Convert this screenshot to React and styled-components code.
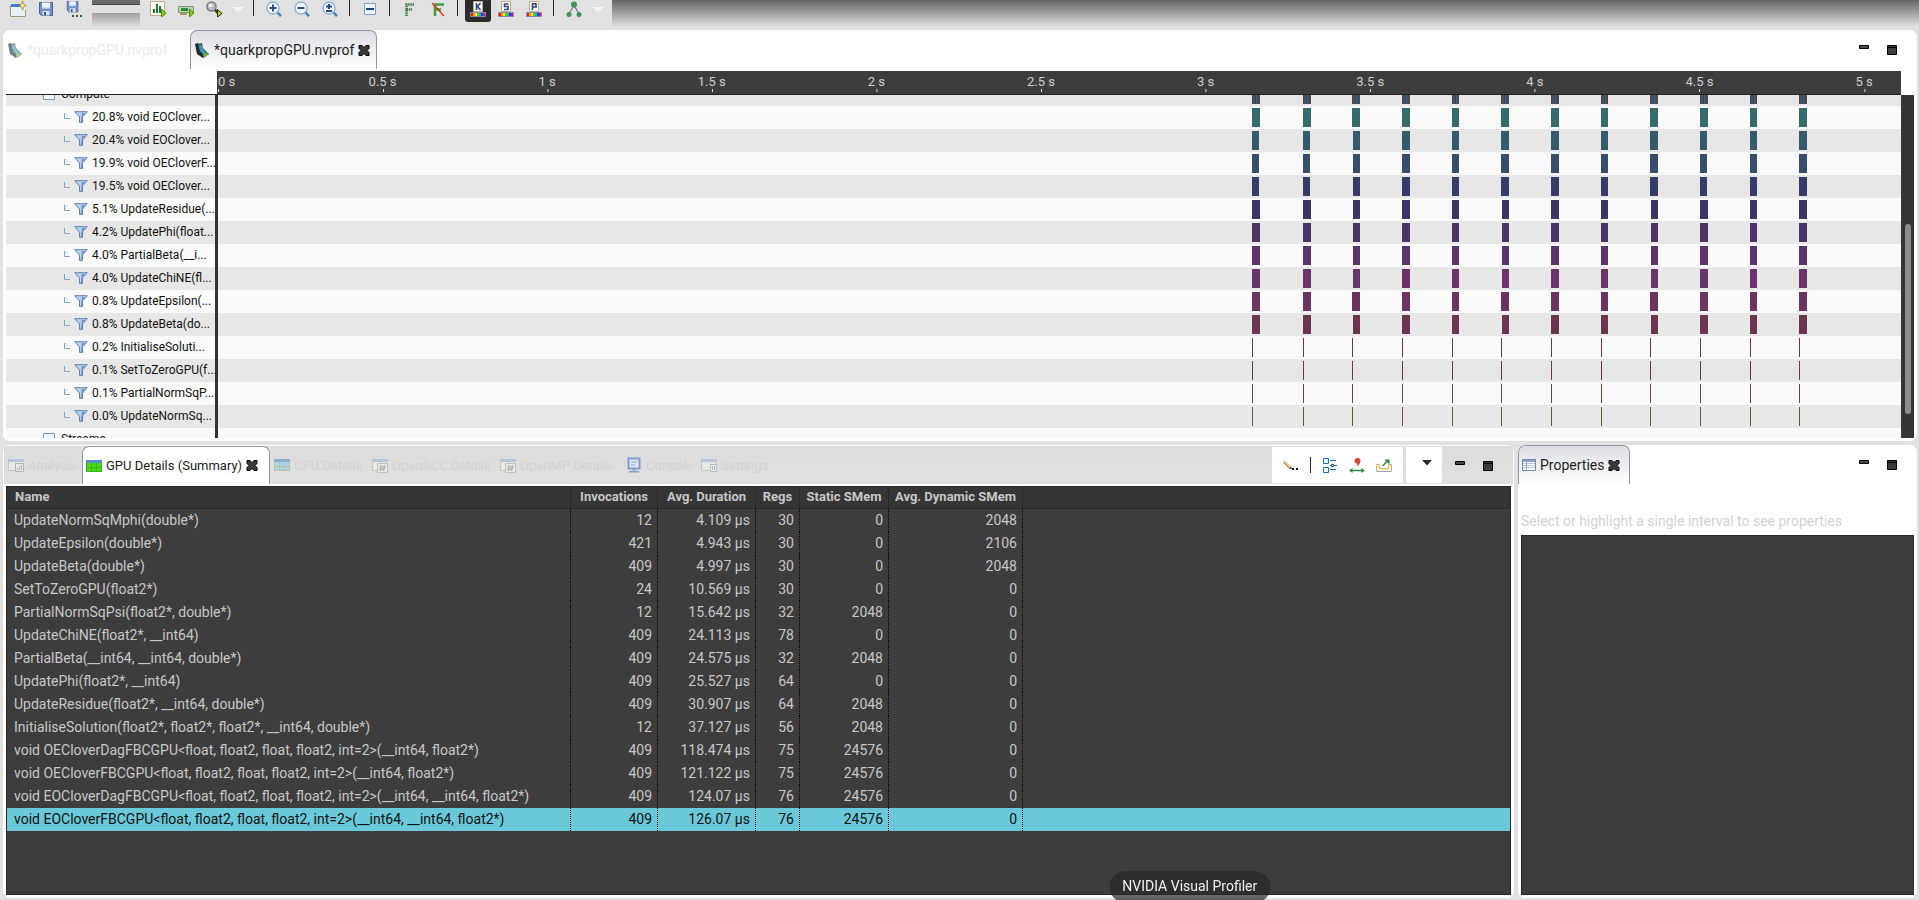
import React from 'react';
import styled, { createGlobalStyle, css } from 'styled-components';

const LANE_WIDTH = 1683; // timeline units, one per pixel on a full hd window
const HALF_SECOND = 164.6;

const ticks = ['0 s', '0.5 s', '1 s', '1.5 s', '2 s', '2.5 s', '3 s', '3.5 s', '4 s', '4.5 s', '5 s'];

// [start, length] of each burst of kernels
const wide = [[1034, 8], [1085, 8], [1134, 8], [1184, 8], [1234, 7], [1283, 8], [1333, 8], [1383, 7], [1432, 8], [1482, 8], [1532, 7], [1581, 8]];
const late = [[1034, 8], [1085, 8], [1135, 7], [1184, 8], [1234, 7], [1284, 7], [1333, 8], [1383, 7], [1433, 7], [1482, 8], [1532, 7], [1581, 8]];
const short = [[1034, 7], [1085, 7], [1135, 7], [1184, 8], [1234, 7], [1283, 8], [1333, 8], [1383, 7], [1432, 8], [1482, 7], [1532, 7], [1581, 8]];
const thin = wide.map(([start]) => [start, 1]);

const kernels = [
    { label: '20.8% void EOClover...', color: '#356b6a', bars: wide },
    { label: '20.4% void EOClover...', color: '#345b6b', bars: short },
    { label: '19.9% void OECloverF...', color: '#364d6b', bars: short },
    { label: '19.5% void OEClover...', color: '#353c6a', bars: short },
    { label: '5.1% UpdateResidue(...', color: '#3b3468', bars: late },
    { label: '4.2% UpdatePhi(float...', color: '#4c3468', bars: late },
    { label: '4.0% PartialBeta(__i...', color: '#5a346a', bars: late },
    { label: '4.0% UpdateChiNE(fl...', color: '#6a346a', bars: late },
    { label: '0.8% UpdateEpsilon(...', color: '#6b345e', bars: wide },
    { label: '0.8% UpdateBeta(do...', color: '#6b3450', bars: late },
    { label: '0.2% InitialiseSoluti...', color: '#6b343f', bars: thin },
    { label: '0.1% SetToZeroGPU(f...', color: '#6b3534', bars: thin },
    { label: '0.1% PartialNormSqP...', color: '#6b4634', bars: thin },
    { label: '0.0% UpdateNormSq...', color: '#6b5634', bars: thin },
];

const columns = [
    { title: 'Name', width: 564 },
    { title: 'Invocations', width: 87 },
    { title: 'Avg. Duration', width: 98 },
    { title: 'Regs', width: 44 },
    { title: 'Static SMem', width: 89 },
    { title: 'Avg. Dynamic SMem', width: 134 },
];

const details = [
    ['UpdateNormSqMphi(double*)', '12', '4.109 µs', '30', '0', '2048'],
    ['UpdateEpsilon(double*)', '421', '4.943 µs', '30', '0', '2106'],
    ['UpdateBeta(double*)', '409', '4.997 µs', '30', '0', '2048'],
    ['SetToZeroGPU(float2*)', '24', '10.569 µs', '30', '0', '0'],
    ['PartialNormSqPsi(float2*, double*)', '12', '15.642 µs', '32', '2048', '0'],
    ['UpdateChiNE(float2*, __int64)', '409', '24.113 µs', '78', '0', '0'],
    ['PartialBeta(__int64, __int64, double*)', '409', '24.575 µs', '32', '2048', '0'],
    ['UpdatePhi(float2*, __int64)', '409', '25.527 µs', '64', '0', '0'],
    ['UpdateResidue(float2*, __int64, double*)', '409', '30.907 µs', '64', '2048', '0'],
    ['InitialiseSolution(float2*, float2*, float2*, __int64, double*)', '12', '37.127 µs', '56', '2048', '0'],
    ['void OECloverDagFBCGPU<float, float2, float, float2, int=2>(__int64, float2*)', '409', '118.474 µs', '75', '24576', '0'],
    ['void OECloverFBCGPU<float, float2, float, float2, int=2>(__int64, float2*)', '409', '121.122 µs', '75', '24576', '0'],
    ['void EOCloverDagFBCGPU<float, float2, float, float2, int=2>(__int64, __int64, float2*)', '409', '124.07 µs', '76', '24576', '0'],
    ['void EOCloverFBCGPU<float, float2, float, float2, int=2>(__int64, __int64, float2*)', '409', '126.07 µs', '76', '24576', '0'],
];

const percent = (value) => `${(value / LANE_WIDTH) * 100}%`;

/* icons */

const Icon = ({ size = 16, children }) => (
    <svg width={size} height={size} viewBox="0 0 16 16" fill="none" aria-hidden="true">{children}</svg>
);

const NewIcon = () => (
    <Icon>
        <path d="M.5 4.500V15.500H15.500V9" fill="#eef6fc" stroke="#a8946a" />
        <path d="M1 3h10v3H1z" fill="#3f7fc4" />
        <path d="M1 6h14v9H1z" fill="#e6f1f8" />
        <path d="M12.500 0l1.200 3.300L16 4.500l-2.300 1.200L12.500 9l-1.200-3.300L9 4.500l2.300-1.200z" fill="#fff2b0" stroke="#a97818" strokeWidth=".8" />
    </Icon>
);

const Disk = () => (
    <>
        <path d="M1.500 1.500h13v13h-11l-2-2z" fill="#6f8fc9" stroke="#4a66a0" />
        <path d="M4 1.500h8v6H4z" fill="#eef3fb" />
        <path d="M4 7h8" stroke="#b9c8e4" />
        <path d="M4.500 10h7v4.500h-7z" fill="#dfe3ea" />
        <path d="M6 11h2v3.500H6z" fill="#3d548a" />
    </>
);

const SaveIcon = () => <Icon><Disk /></Icon>;

const SaveAllIcon = () => (
    <Icon>
        <g transform="translate(0 -1) scale(.82)"><Disk /></g>
        <path d="M6 14h2v2H6zM10 14h2v2h-2zM14 14h2v2h-2z" fill="#1f6b2c" />
    </Icon>
);

const Play = () => <path d="M11.500 8l4.500 4-4.500 4z" fill="#8fd400" stroke="#2f7a10" strokeWidth=".8" />;

const ChartIcon = () => (
    <Icon>
        <path d="M.5.5h14v14H.5z" fill="#fffef6" stroke="#bfae7d" />
        <path d="M3 8h2v4H3zM6 3h2v9H6zM9 5h2v7H9z" fill="#1f7a3a" />
        <Play />
    </Icon>
);

const CardIcon = () => (
    <Icon>
        <path d="M.5 5.500h15v6H.5z" fill="#b9d3b0" stroke="#7c9874" />
        <path d="M3 7h7v3H3z" fill="#2c8c3c" />
        <path d="M2 12h7v2H2z" fill="#ad9a60" />
        <Play />
    </Icon>
);

const InspectIcon = () => (
    <Icon>
        <circle cx="5.500" cy="5.500" r="4.500" fill="#bdbdbd" stroke="#7b7b7b" strokeWidth="1.500" />
        <circle cx="4.500" cy="4.500" r="1.800" fill="#f2f2f2" />
        <path d="M9 9l4 4" stroke="#3f3f20" strokeWidth="2.500" />
        <path d="M11.500 8.500l4.500 4-4.500 3.500z" fill="#b2e000" stroke="#222" />
    </Icon>
);

const ZoomIcon = ({ mark }) => (
    <Icon>
        <path d="M11 11l4 4.200" stroke="#4d7fb8" strokeWidth="2.500" />
        <circle cx="7" cy="7" r="6" fill="#f6faff" stroke="#8fb2da" strokeWidth="1.400" />
        <path d={mark} stroke="#27498f" strokeWidth="2" />
    </Icon>
);

const CollapseIcon = () => (
    <Icon>
        <path d="M2.500 2.500h11v11h-11z" fill="#e8f6fd" stroke="#7f9cc0" />
        <path d="M4 8h8" stroke="#1d4480" strokeWidth="2" />
    </Icon>
);

const FilterOnIcon = () => (
    <Icon>
        <path d="M4.500 15V3.500H12M4.500 8.500H10" stroke="#3f7a45" strokeWidth="2.500" strokeDasharray="1.500 .7" />
    </Icon>
);

const FilterOffIcon = () => (
    <Icon>
        <path d="M5 15V3.500h9M5 8.500h6" stroke="#3fa03f" strokeWidth="2.500" />
        <path d="M2 2l12 13" stroke="#ff1a1a" strokeWidth="1.200" />
    </Icon>
);

const LetterIcon = ({ mark }) => (
    <Icon>
        <path d="M3.500.5h9v10h-9z" fill="#fffdf2" stroke="#b6ad86" />
        <path d={mark} stroke="#28468a" strokeWidth="1.600" />
        <path d="M.5 11.500h15v4H.5z" fill="#777" stroke="#8a86b8" />
        <path d="M1 12h2v3H1z" fill="#e02020" />
        <path d="M3 12h2v3H3z" fill="#ff9a00" />
        <path d="M5 12h2v3H5z" fill="#ffee00" />
        <path d="M7 12h2v3H7z" fill="#40d830" />
        <path d="M9 12h2v3H9z" fill="#18b0c8" />
        <path d="M11 12h2v3h-2z" fill="#2040d0" />
        <path d="M13 12h2v3h-2z" fill="#c01890" />
    </Icon>
);

const GraphIcon = () => (
    <Icon>
        <path d="M3 13L8 4l5 9" stroke="#777c99" strokeWidth="1.300" />
        <circle cx="8" cy="3.500" r="3" fill="#3f9655" />
        <circle cx="3" cy="13.500" r="2.500" fill="#3f9655" />
        <circle cx="13" cy="13.500" r="2.500" fill="#3f9655" />
    </Icon>
);

const ProfileIcon = () => (
    <Icon>
        <path d="M2 2l6-1 1 5 6 6-5 4-6-4-2-5z" fill="#2d6b4e" />
        <path d="M1 2l3-1 1 6 4 5v4l-6-4z" fill="#1b2c31" />
        <path d="M5 4l3-1 1 4 3 4-2 2-4-4z" fill="#3e9bb5" />
        <path d="M9 12l6-1-5 5z" fill="#7fae3e" />
    </Icon>
);

const CloseIcon = () => (
    <svg width="12" height="11" viewBox="0 0 12 11" aria-hidden="true">
        <path d="M1 .5h3l2 2 2-2h3v3l-2 2 2 2v3H8l-2-2-2 2H1v-3l2-2-2-2z" fill="#3a3a3a" stroke="#000" />
    </svg>
);

const FunnelIcon = () => (
    <svg width="14" height="12" viewBox="0 0 14 12" aria-hidden="true">
        <path d="M.7.7h12.600L8.500 6v5.400h-3V6z" fill="#b9cfeb" stroke="#5c80b8" />
        <path d="M8 2h3L8 5.500V11H7z" fill="#6a8cc4" />
    </svg>
);

const BranchIcon = () => (
    <svg width="6" height="8" viewBox="0 0 6 8" aria-hidden="true">
        <path d="M1 0h3v4H1z" fill="#d9f0f8" />
        <path d="M.5 0v5.500H6" fill="none" stroke="#8c9db8" />
    </svg>
);

const NodeIcon = () => (
    <svg width="12" height="12" viewBox="0 0 12 12" aria-hidden="true">
        <path d="M.5.5h11v11H.5z" fill="#eaf7fd" stroke="#7f94b4" />
        <path d="M3 6h6" stroke="#1d4480" strokeWidth="2" />
    </svg>
);

const WindowFrame = () => (
    <>
        <path d="M.5 2.500h15v11H.5z" fill="#e8f2f4" stroke="#bfb490" />
        <path d="M0 2h16v3H0z" fill="#9db9d8" />
    </>
);

const AnalysisIcon = () => (
    <Icon>
        <WindowFrame />
        <path d="M7.500 6.500h8v8h-8z" fill="#f2f2ee" stroke="#9a9a92" />
        <path d="M9.500 11v2M11.500 9v4M13.500 8v5" stroke="#8aa08a" />
    </Icon>
);

const GridIcon = ({ cell, line }) => (
    <Icon>
        <path d="M0 2h16v12H0z" fill={cell} />
        <path d="M0 2h16v3H0z" fill="#5b8cc9" />
        <path d="M.5 5v9M5.500 5v9M10.500 5v9M15.500 5v9M0 9.500h16M0 13.500h16" stroke={line} />
    </Icon>
);

const HashIcon = () => (
    <Icon>
        <WindowFrame />
        <path d="M5.500 6.500h10v9h-10z" fill="#f0efea" stroke="#bfb08c" />
        <path d="M9.500 8l-1 6M12.500 8l-1 6M7.500 10h6M7 12h6" stroke="#8a8a90" />
    </Icon>
);

const ConsoleIcon = () => (
    <Icon>
        <path d="M2.500 1.500h11v10h-11z" fill="#dfe9f6" stroke="#7f9ccb" strokeWidth="2" />
        <path d="M5 5h6M5 8h4" stroke="#8ea6cc" />
        <path d="M6 12h4v1.500H6zM3 14h10v1.500H3z" fill="#86a3cf" />
    </Icon>
);

const SettingsIcon = () => (
    <Icon>
        <WindowFrame />
        <path d="M9.500 7.500h6v7h-6z" fill="#f6f8f8" stroke="#9aa5b4" />
        <path d="M11.500 9v4" stroke="#7ab870" />
        <path d="M13.500 9v4" stroke="#6e8ee0" />
    </Icon>
);

const PropertiesIcon = () => (
    <svg width="14" height="12" viewBox="0 0 14 12" fill="none" aria-hidden="true">
        <path d="M.5.5h13v11H.5z" fill="#fff" stroke="#6f87ad" />
        <path d="M1 1h12v2H1z" fill="#8fa6c6" />
        <path d="M1 4.500h12M1 6.500h12M1 8.500h12" stroke="#b4c6dc" />
        <path d="M4.500 3v8" stroke="#8fa6c6" />
    </svg>
);

const PencilIcon = () => (
    <Icon>
        <path d="M1 4.500l6 6" stroke="#b98d4c" strokeWidth="3" />
        <path d="M1.500 4l5.500 5.500" stroke="#f6dfae" strokeWidth="1.500" />
        <path d="M6 12h2.500V9.500z" fill="#222" />
        <path d="M9 11h2v2H9zM13 11h2v2h-2z" fill="#111" />
    </Icon>
);

const HierarchyIcon = () => (
    <Icon>
        <path d="M1.500 1.500h5v5h-5zM1.500 10.500h5v5h-5z" fill="#e8f4fc" stroke="#1f72b4" />
        <path d="M8 3.500h6M8 12.500h6M8 8.500h7" stroke="#1f72b4" />
        <path d="M9.500 7.500h2v2h-2z" fill="#fff" stroke="#16508a" />
    </Icon>
);

const CommaIcon = () => (
    <Icon>
        <path d="M8.500 1c2.600 0 3.600 2 2.600 4.500C10.300 7.600 9 9 7.500 9.500c.8-1.200 1-2 .6-3C6 6.500 5.500 5 5.500 3.800 5.500 2.200 6.800 1 8.500 1z" fill="#cf4a3a" />
        <path d="M2 13.500h12" stroke="#2c8a3c" strokeWidth="1.500" />
        <path d="M3.500 11L0 13.500 3.500 16zM12.500 11l3.500 2.500-3.500 2.500z" fill="#2c8a3c" />
    </Icon>
);

const ExportIcon = () => (
    <Icon>
        <path d="M.5 7.500h3v4h9v-4h3v7H.5z" fill="#fbf3cf" stroke="#c9b872" />
        <path d="M1 14.500h14" stroke="#9aa4bc" />
        <path d="M6.500 9L12 3.500" stroke="#2c8a3c" strokeWidth="1.500" />
        <path d="M8.500 2.500h5v5z" fill="#2c8a3c" />
    </Icon>
);

const Triangle = ({ fill }) => (
    <svg width="10" height="6" viewBox="0 0 10 6" aria-hidden="true">
        <path d="M0 0h10L5 5.500z" fill={fill} />
    </svg>
);

const MinimizeIcon = () => (
    <svg width="10" height="10" viewBox="0 0 10 10" aria-hidden="true">
        <path d="M.5.5h9v3h-9z" fill="#4a4a4a" stroke="#000" />
    </svg>
);

const MaximizeIcon = () => (
    <svg width="10" height="10" viewBox="0 0 10 10" aria-hidden="true">
        <path d="M.5.5h9v9h-9z" fill="#3c3c3c" stroke="#000" />
        <path d="M1 2.500h8" stroke="#000" />
    </svg>
);

const WindowButtons = () => (
    <WindowControls>
        <WindowButton type="button" aria-label="Minimize"><MinimizeIcon /></WindowButton>
        <WindowButton type="button" aria-label="Maximize"><MaximizeIcon /></WindowButton>
    </WindowControls>
);

const MainToolbar = () => (
    <TopStrip>
        <Toolbar>
            <ToolButton type="button" aria-label="New"><NewIcon /></ToolButton>
            <ToolButton type="button" aria-label="Save"><SaveIcon /></ToolButton>
            <ToolButton type="button" aria-label="Save all"><SaveAllIcon /></ToolButton>
            <ShadedGap />
            <ToolButton type="button" aria-label="Analyze"><ChartIcon /></ToolButton>
            <ToolButton type="button" aria-label="Device"><CardIcon /></ToolButton>
            <ToolButton type="button" aria-label="Inspect"><InspectIcon /></ToolButton>
            <ArrowButton type="button" aria-label="Inspect menu"><Triangle fill="#f6f6f6" /></ArrowButton>
            <Separator />
            <ToolButton type="button" aria-label="Zoom in"><ZoomIcon mark="M3.500 7h7M7 3.500v7" /></ToolButton>
            <ToolButton type="button" aria-label="Zoom out"><ZoomIcon mark="M3.500 7h7" /></ToolButton>
            <ToolButton type="button" aria-label="Zoom to fit"><ZoomIcon mark="M4 5.500h6M7 3v5M4 10h6" /></ToolButton>
            <Separator />
            <ToolButton type="button" aria-label="Collapse"><CollapseIcon /></ToolButton>
            <Separator />
            <ToolButton type="button" aria-label="Filter"><FilterOnIcon /></ToolButton>
            <ToolButton type="button" aria-label="Clear filter"><FilterOffIcon /></ToolButton>
            <Separator />
            <ToolButton type="button" aria-label="Color by kernel" $pressed><LetterIcon mark="M6.500 2v7M10.500 2l-3 3.500 3 3.500" /></ToolButton>
            <ToolButton type="button" aria-label="Color by stream"><LetterIcon mark="M10.500 3h-4v2.500h3.500V8.500h-4" /></ToolButton>
            <ToolButton type="button" aria-label="Color by process"><LetterIcon mark="M6.500 9V2.800h3.500V6H6.500" /></ToolButton>
            <Separator />
            <ToolButton type="button" aria-label="Dependencies"><GraphIcon /></ToolButton>
            <ArrowButton type="button" aria-label="Dependencies menu"><Triangle fill="#f6f6f6" /></ArrowButton>
        </Toolbar>
    </TopStrip>
);

const Timeline = () => (
    <TimelinePanel>
        <TabBar>
            <Tab type="button" $width={187} $faded="#ececec"><FadedIcon><ProfileIcon /></FadedIcon>*quarkpropGPU.nvprof</Tab>
            <Tab type="button" $width={187} $shaded><ProfileIcon />*quarkpropGPU.nvprof<CloseIcon /></Tab>
            <Spacer />
            <WindowButtons />
        </TabBar>
        <TimelineBody>
            <TimelineMain>
                <RulerRow>
                    <Ruler>
                        {ticks.map((tick, i) => (
                            <Tick key={tick} $first={i === 0} style={{ left: percent(i * HALF_SECOND) }}>{tick}</Tick>
                        ))}
                    </Ruler>
                </RulerRow>
                <TimelineRow $cut="top">
                    <RowLabel $level={1}><NodeIcon />Compute</RowLabel>
                    <Lane>
                        {wide.map(([start, length]) => (
                            <MixedBar key={start} style={{ left: percent(start), width: percent(length) }} />
                        ))}
                    </Lane>
                </TimelineRow>
                {kernels.map(({ label, color, bars }) => (
                    <TimelineRow key={label}>
                        <RowLabel><BranchIcon /><FunnelIcon />{label}</RowLabel>
                        <Lane>
                            {bars.map(([start, length]) => (
                                <Bar
                                    key={start}
                                    $color={color}
                                    style={{ left: percent(start), width: length === 1 ? 1 : percent(length) }}
                                />
                            ))}
                        </Lane>
                    </TimelineRow>
                ))}
                <TimelineRow $cut="bottom">
                    <RowLabel $level={1}><NodeIcon />Streams</RowLabel>
                    <Lane />
                </TimelineRow>
            </TimelineMain>
            <ScrollTrack><ScrollThumb /></ScrollTrack>
        </TimelineBody>
    </TimelinePanel>
);

const Details = () => (
    <DetailsPanel>
        <TabBar $gray>
            <Tab type="button" $width={78} $faded="#d2d2d2"><FadedIcon><AnalysisIcon /></FadedIcon>Analysis</Tab>
            <Tab type="button" $width={188} $active><GridIcon cell="#43e000" line="#3fae2a" />GPU Details (Summary)<CloseIcon /></Tab>
            <Tab type="button" $width={98} $faded="#d2d2d2"><FadedIcon><GridIcon cell="#7cd8f4" line="#b9a878" /></FadedIcon>CPU Details</Tab>
            <Tab type="button" $width={128} $faded="#d2d2d2"><FadedIcon><HashIcon /></FadedIcon>OpenACC Details</Tab>
            <Tab type="button" $width={126} $faded="#d2d2d2"><FadedIcon><HashIcon /></FadedIcon>OpenMP Details</Tab>
            <Tab type="button" $width={75} $faded="#d2d2d2"><ConsoleIcon />Console</Tab>
            <Tab type="button" $width={80} $faded="#d2d2d2"><FadedIcon><SettingsIcon /></FadedIcon>Settings</Tab>
            <Spacer />
            <ViewTools>
                <ViewButton type="button" aria-label="Edit"><PencilIcon /></ViewButton>
                <ViewSeparator />
                <ViewButton type="button" aria-label="Group"><HierarchyIcon /></ViewButton>
                <ViewButton type="button" aria-label="Precision"><CommaIcon /></ViewButton>
                <ViewButton type="button" aria-label="Export"><ExportIcon /></ViewButton>
            </ViewTools>
            <ViewMenu type="button" aria-label="View menu"><Triangle fill="#2a2a2a" /></ViewMenu>
            <WindowButtons />
        </TabBar>
        <DarkArea>
            <DetailsTable>
                <colgroup>
                    {columns.map(({ title, width }) => <Column key={title} $width={width} />)}
                    <col />
                </colgroup>
                <thead>
                    <tr>
                        {columns.map(({ title }) => <HeadCell key={title} scope="col">{title}</HeadCell>)}
                        <HeadCell as="td" />
                    </tr>
                </thead>
                <tbody>
                    {details.map((cells, i) => (
                        <DetailsRow key={cells[0]} $selected={i === details.length - 1}>
                            {cells.map((cell, c) => <Cell key={columns[c].title}>{cell}</Cell>)}
                            <Cell />
                        </DetailsRow>
                    ))}
                </tbody>
            </DetailsTable>
        </DarkArea>
    </DetailsPanel>
);

const Properties = () => (
    <PropertiesPanel>
        <TabBar>
            <Tab type="button" $width={112} $shaded><PropertiesIcon />Properties<CloseIcon /></Tab>
            <Spacer />
            <WindowButtons />
        </TabBar>
        <Hint>Select or highlight a single interval to see properties</Hint>
        <DarkArea />
    </PropertiesPanel>
);

const App = () => (
    <Page>
        <GlobalStyle />
        <MainToolbar />
        <Timeline />
        <LowerPanels>
            <Details />
            <Properties />
        </LowerPanels>
        <DockLabel>NVIDIA Visual Profiler</DockLabel>
    </Page>
);

const GlobalStyle = createGlobalStyle`
    * {
        box-sizing: border-box;
    }
    body {
        margin: 0;
        background: #e1e1e1;
    }
    body, button {
        font-family: Roboto, sans-serif;
        font-size: 14px;
    }
    button {
        border: 0;
        padding: 0;
        background: none;
        color: inherit;
    }
    svg {
        flex: none;
    }
`;

const Page = styled.div`
    display: flex;
    flex-direction: column;
    min-height: 100vh;
    padding: 0 2px 2px 3px;
    color: #1c1c1c;
`;

const TopStrip = styled.header`
    height: 30px;
    margin: 0 -2px 0 -3px;
    background: linear-gradient(#666, #e1e1e1 27px);
    overflow: hidden;
`;

const Toolbar = styled.div`
    display: flex;
    width: 612px;
    height: 30px;
    padding: 0 4px;
    background: #e1e1e1;
`;

const ToolButton = styled.button`
    display: flex;
    align-items: flex-end;
    justify-content: center;
    width: 28px;
    height: 22px;
    padding-bottom: 5px;
    ${({ $pressed }) => $pressed && css`
        width: 26px;
        margin: 0 1px;
        background: #2b2b2b;
        border-radius: 0 0 3px 3px;
    `}
`;

const ArrowButton = styled.button`
    display: flex;
    align-items: center;
    justify-content: center;
    width: 20px;
    height: 20px;
`;

const Separator = styled.span`
    width: 1px;
    height: 16px;
    margin: 0 6px 0 5px;
    background: #222;
`;

const ShadedGap = styled.span`
    width: 48px;
    height: 27px;
    margin: 0 4px;
    background: linear-gradient(#6a6a6a 4px, #444 4px, #444 5px, #e1e1e1 5px, #e1e1e1 13px, #a0a0a0 13px, #e1e1e1);
`;

const Panel = styled.section`
    display: flex;
    flex-direction: column;
    min-width: 0;
    padding: 0 3px 3px;
    background: #fff;
    border-radius: 7px;
    overflow: hidden;
`;

const TimelinePanel = styled(Panel)`
    margin-bottom: 4px;
`;

const DetailsPanel = styled(Panel)`
    flex: 1505;
`;

const PropertiesPanel = styled(Panel)`
    flex: 393;
`;

const LowerPanels = styled.div`
    display: flex;
    flex: 1;
    gap: 4px;
`;

const Tab = styled.button`
    display: flex;
    align-items: center;
    gap: 4px;
    flex: none;
    width: ${({ $width }) => $width}px;
    padding: 0 4px;
    white-space: nowrap;
    color: ${({ $faded }) => $faded || '#1c1c1c'};
    ${({ $shaded, $active }) => ($shaded || $active) && css`
        padding: 0 3px;
        border: 1px solid #9095a0;
        border-bottom: 0;
        border-radius: 7px 7px 0 0;
        background: ${$shaded ? 'linear-gradient(#dcdee5, #fff)' : '#fff'};
    `}
`;

const TabBar = styled.div`
    display: flex;
    height: 41px;
    margin: 0 -3px;
    padding-bottom: 2px;
    ${({ $gray }) => $gray && css`
        margin: 0 -2px;
        border-top: 1px solid #fff;
        background: linear-gradient(#dcdcdc, #e0e0e0 38px, #fff 38px);
        & > ${Tab} {
            font-size: 13px;
        }
    `}
`;

const Spacer = styled.span`
    flex: 1;
`;

const FadedIcon = styled.span`
    display: flex;
    opacity: 0.6;
`;

const WindowControls = styled.div`
    display: flex;
    gap: 18px;
    padding: 15px 20px 0 13px;
`;

const WindowButton = styled.button`
    display: flex;
    align-items: flex-start;
    width: 10px;
    height: 10px;
`;

const TimelineBody = styled.div`
    display: flex;
`;

const TimelineMain = styled.div`
    flex: 1;
    min-width: 0;
`;

const RulerRow = styled.div`
    height: 24px;
    padding-left: 211px;
    border-bottom: 1px solid #222;
`;

const Ruler = styled.div`
    position: relative;
    height: 23px;
    margin-left: 1px;
    box-shadow: -1px 0 #3d3d3d;
    background: #3d3d3d;
    color: #cfcfcf;
    font-size: 13px;
    line-height: 22px;
`;

const Tick = styled.span`
    position: absolute;
    top: 0;
    transform: ${({ $first }) => ($first ? 'none' : 'translateX(-50%)')};
    white-space: nowrap;
    &::after {
        content: "";
        position: absolute;
        top: 18px;
        left: ${({ $first }) => ($first ? '0' : '50%')};
        width: 1px;
        height: 3px;
        background: #ddd;
    }
`;

const TimelineRow = styled.div`
    display: flex;
    align-items: stretch;
    height: 23px;
    background: #fafafa;
    overflow: hidden;
    &:nth-child(even) {
        background: #e7e7e7;
    }
    ${({ $cut }) => $cut === 'top' && css`
        height: 11px;
        align-items: flex-end;
    `}
    ${({ $cut }) => $cut === 'bottom' && css`
        height: 10px;
        align-items: flex-start;
    `}
`;

const RowLabel = styled.div`
    display: flex;
    align-items: center;
    gap: ${({ $level }) => ($level ? '6px' : '4px')};
    flex: none;
    width: 212px;
    height: 23px;
    padding-left: ${({ $level }) => ($level ? '37px' : '58px')};
    padding-bottom: 2px;
    border-right: 3px solid #333;
    color: #111;
    font-size: 12px;
    white-space: nowrap;
    overflow: hidden;
`;

const Lane = styled.div`
    position: relative;
    flex: 1;
    height: 23px;
`;

const Bar = styled.span`
    position: absolute;
    top: 2px;
    height: 19px;
    background: ${({ $color }) => $color};
`;

const MixedBar = styled(Bar)`
    background: repeating-linear-gradient(90deg, #6b3534 0 1px, #345b6b 1px 3px, #4c3468 3px 4px, #356b6a 4px 5px, #364d6b 5px 6px);
`;

const ScrollTrack = styled.div`
    width: 13px;
    margin-top: 24px;
    padding: 129px 3px 24px 4px;
    background: #353535;
`;

const ScrollThumb = styled.div`
    height: 100%;
    border-radius: 3px;
    background: #8c8c8c;
`;

const ViewTools = styled.div`
    display: flex;
    align-items: center;
    gap: 11px;
    height: 36px;
    margin: 1px 3px 0 0;
    padding: 0 11px;
    background: #fff;
`;

const ViewButton = styled.button`
    display: flex;
`;

const ViewSeparator = styled.span`
    width: 1px;
    height: 16px;
    background: #222;
`;

const ViewMenu = styled.button`
    display: flex;
    align-items: center;
    justify-content: center;
    width: 36px;
    height: 36px;
    margin-top: 1px;
    padding: 0 0 4px 6px;
    background: #fff;
`;

const DarkArea = styled.div`
    flex: 1;
    border: 1px solid #2a2a2a;
    background: #3d3d3d;
    overflow: hidden;
`;

const DetailsTable = styled.table`
    width: 100%;
    table-layout: fixed;
    border-collapse: separate;
    border-spacing: 0;
    color: #c8c8c8;
`;

const Column = styled.col`
    width: ${({ $width }) => $width}px;
`;

const HeadCell = styled.th`
    height: 22px;
    padding: 0 0 2px;
    border-right: 1px solid #2a2a2a;
    border-bottom: 1px solid #2a2a2a;
    background: #353535;
    font-size: 13px;
    line-height: 18px;
    text-align: center;
    white-space: nowrap;
    &:first-child {
        padding-left: 8px;
        text-align: left;
    }
`;

const Cell = styled.td`
    height: 23px;
    padding: 0 5px 1px 7px;
    border-right: 1px dotted #000;
    text-align: right;
    white-space: nowrap;
    &:first-child {
        text-align: left;
    }
    &:last-child {
        border-right: 0;
    }
`;

const DetailsRow = styled.tr`
    ${({ $selected }) => $selected && css`
        background: #6ac9d8;
        color: #111;
    `}
`;

const Hint = styled.p`
    height: 49px;
    margin: 0;
    padding-top: 26px;
    color: #d2d2d2;
    line-height: 18px;
    white-space: nowrap;
`;

const DockLabel = styled.div`
    position: fixed;
    bottom: -3px;
    left: 62%;
    transform: translateX(-50%);
    padding: 0 13px 2px;
    border-radius: 16px;
    background: rgba(40, 40, 40, 0.7);
    color: #f0f0f0;
    line-height: 30px;
    white-space: nowrap;
`;

export default App;
